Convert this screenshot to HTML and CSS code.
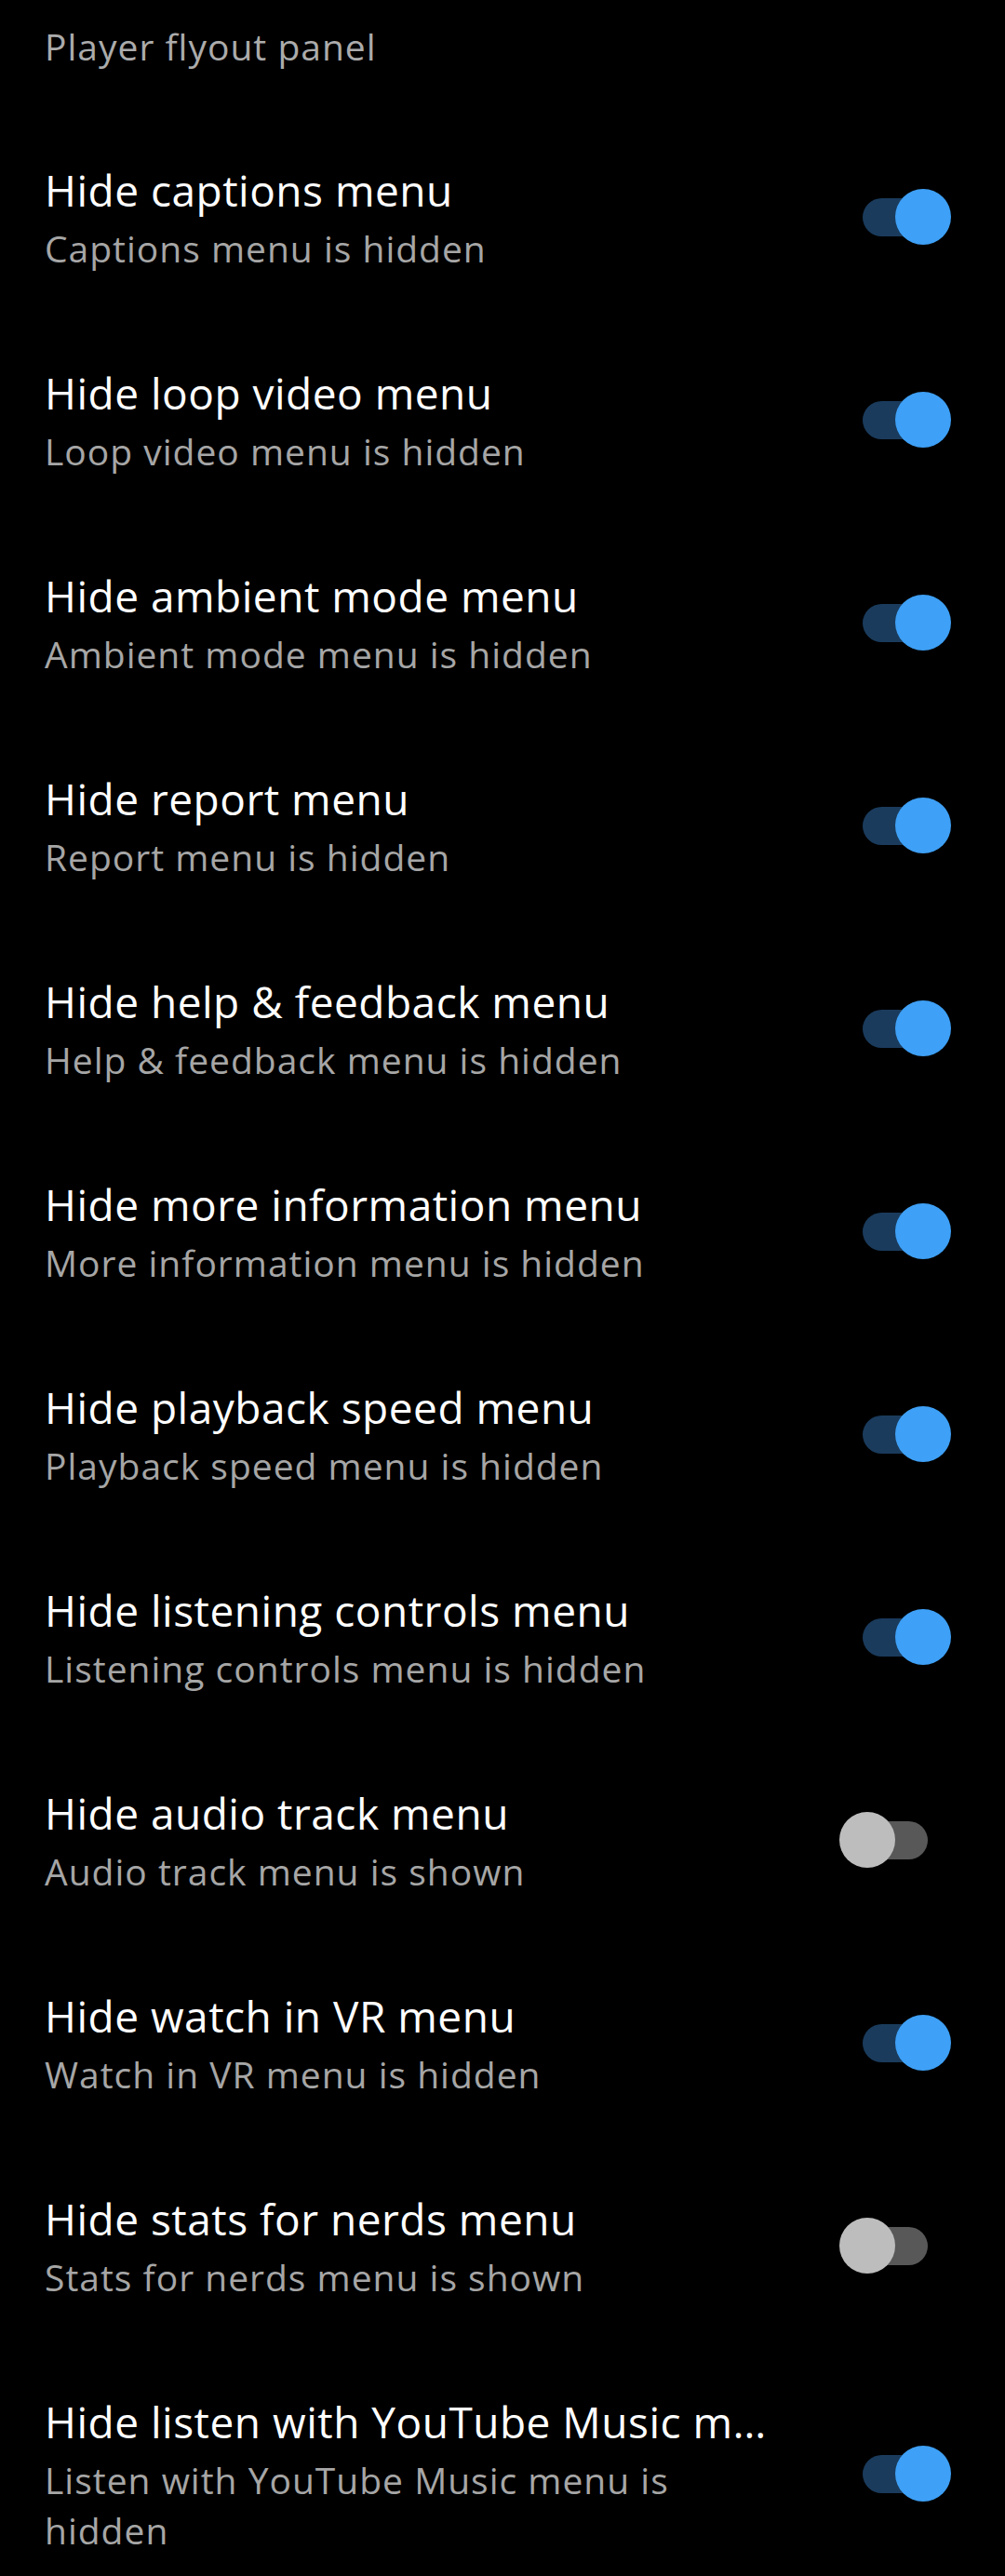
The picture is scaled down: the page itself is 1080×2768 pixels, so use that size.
FILE: index.html
```html
<!DOCTYPE html>
<html lang="en">
<head>
<meta charset="utf-8">
<title>Player flyout panel</title>
<link rel="stylesheet" href="styles.css">
</head>
<body>
<div class="screen">
  <div class="header">Player flyout panel</div>

  <div class="row">
    <div class="text"><div class="title">Hide captions menu</div><div class="summary">Captions menu is hidden</div></div>
    <div class="switch on"><span class="track"></span><span class="thumb"></span></div>
  </div>
  <div class="row">
    <div class="text"><div class="title">Hide loop video menu</div><div class="summary">Loop video menu is hidden</div></div>
    <div class="switch on"><span class="track"></span><span class="thumb"></span></div>
  </div>
  <div class="row">
    <div class="text"><div class="title">Hide ambient mode menu</div><div class="summary">Ambient mode menu is hidden</div></div>
    <div class="switch on"><span class="track"></span><span class="thumb"></span></div>
  </div>
  <div class="row">
    <div class="text"><div class="title">Hide report menu</div><div class="summary">Report menu is hidden</div></div>
    <div class="switch on"><span class="track"></span><span class="thumb"></span></div>
  </div>
  <div class="row">
    <div class="text"><div class="title">Hide help &amp; feedback menu</div><div class="summary">Help &amp; feedback menu is hidden</div></div>
    <div class="switch on"><span class="track"></span><span class="thumb"></span></div>
  </div>
  <div class="row">
    <div class="text"><div class="title">Hide more information menu</div><div class="summary">More information menu is hidden</div></div>
    <div class="switch on"><span class="track"></span><span class="thumb"></span></div>
  </div>
  <div class="row">
    <div class="text"><div class="title">Hide playback speed menu</div><div class="summary">Playback speed menu is hidden</div></div>
    <div class="switch on"><span class="track"></span><span class="thumb"></span></div>
  </div>
  <div class="row">
    <div class="text"><div class="title">Hide listening controls menu</div><div class="summary">Listening controls menu is hidden</div></div>
    <div class="switch on"><span class="track"></span><span class="thumb"></span></div>
  </div>
  <div class="row">
    <div class="text"><div class="title">Hide audio track menu</div><div class="summary">Audio track menu is shown</div></div>
    <div class="switch off"><span class="track"></span><span class="thumb"></span></div>
  </div>
  <div class="row">
    <div class="text"><div class="title">Hide watch in VR menu</div><div class="summary">Watch in VR menu is hidden</div></div>
    <div class="switch on"><span class="track"></span><span class="thumb"></span></div>
  </div>
  <div class="row">
    <div class="text"><div class="title">Hide stats for nerds menu</div><div class="summary">Stats for nerds menu is shown</div></div>
    <div class="switch off"><span class="track"></span><span class="thumb"></span></div>
  </div>
  <div class="row">
    <div class="text"><div class="title">Hide listen with YouTube Music m…</div><div class="summary">Listen with YouTube Music menu is hidden</div></div>
    <div class="switch on"><span class="track"></span><span class="thumb"></span></div>
  </div>
</div>
</body>
</html>
```
FILE: styles.css
```css
html, body {
  margin: 0;
  padding: 0;
  background: #000;
}

.screen {
  font-family: "Open Sans", "Noto Sans", sans-serif;
  background: #000;
  display: flex;
  flex-direction: column;
}

.header {
  padding: 24px 48px 48px 48px;
  font-size: 39px;
  line-height: 52px;
  letter-spacing: 1px;
  color: #ababab;
}

.row {
  padding: 46px 58px 46px 48px;
  display: flex;
  align-items: center;
}

.text {
  width: 790px;
  margin-right: 64px;
  display: flex;
  flex-direction: column;
  position: relative;
  top: -2px;
}

.title {
  font-size: 46px;
  line-height: 72px;
  letter-spacing: 0.5px;
  color: #fff;
  white-space: nowrap;
}

.summary {
  font-size: 39px;
  line-height: 54px;
  letter-spacing: 1px;
  color: #a6a6a6;
}

.switch {
  position: relative;
  width: 120px;
  height: 60px;
  flex: none;
}

.track {
  position: absolute;
  left: 25px;
  top: 10px;
  width: 70px;
  height: 41px;
  border-radius: 21px;
}

.thumb {
  position: absolute;
  top: 0;
  width: 60px;
  height: 60px;
  border-radius: 50%;
}

.switch.on .track { background: #1a3b5c; }
.switch.on .thumb { left: 60px; background: #3ea0f6; }
.switch.off .track { background: #585858; }
.switch.off .thumb { left: 0; background: #bdbdbd; }
```
